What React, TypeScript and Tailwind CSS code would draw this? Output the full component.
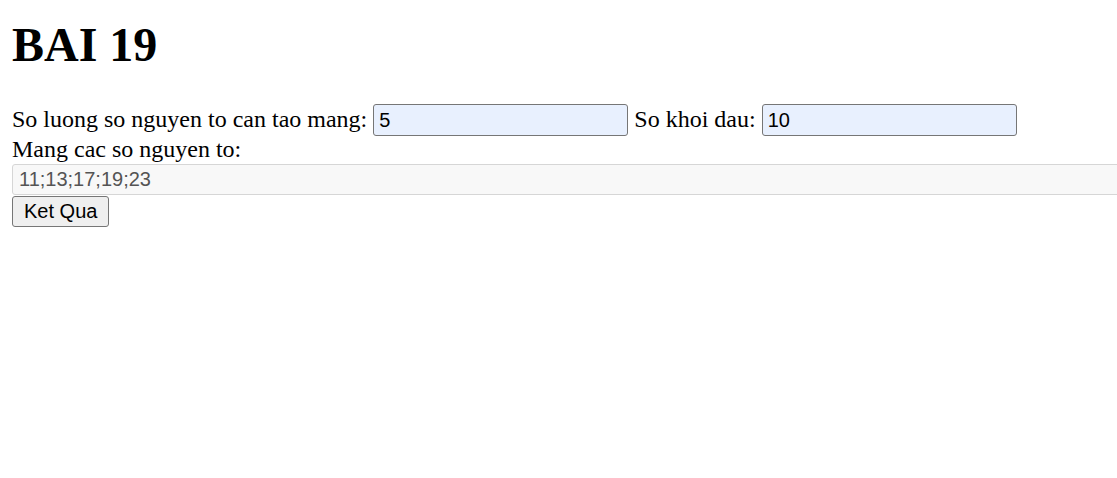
import {useState} from 'react';

// sieve-free check, enough for small numbers
function isPrime(n: number) {
  if (n < 2) return false;
  for (let i = 2; i * i <= n; i++) {
    if (n % i === 0) return false;
  }
  return true;
}

function primesFrom(count: number, start: number) {
  const out: number[] = [];
  let n = start;
  while (out.length < count) {
    if (isPrime(n)) out.push(n);
    n++;
  }
  return out;
}

const inputCls =
  "inline-block align-baseline w-[255px] h-[32px] px-[5px] border border-[#767676] rounded-[3px] bg-[#e8f0fe] text-[20px] text-black font-['Liberation_Sans',Arial,sans-serif] outline-none";

export default function App() {
  const [count, setCount] = useState('5');
  const [start, setStart] = useState('10');
  const [result, setResult] = useState('11;13;17;19;23');

  function handleSubmit(e: React.FormEvent) {
    e.preventDefault();
    const c = parseInt(count, 10) || 0;
    const s = parseInt(start, 10) || 0;
    setResult(primesFrom(c, s).join(';'));
  }

  return (
    <div className="w-full min-h-[478px] overflow-hidden bg-white px-[12px] text-black font-['Liberation_Serif','Times_New_Roman',serif]">
      <h1 className="mt-[17px] mb-[32px] text-[48px] leading-[55px] font-bold">BAI 19</h1>

      <form onSubmit={handleSubmit}>
        <div className="text-[24px] leading-[27.6px]">
          So luong so nguyen to can tao mang:{' '}
          <input
            className={inputCls}
            type="text"
            value={count}
            onChange={(e) => setCount(e.target.value)}
          />{' '}
          So khoi dau:{' '}
          <input
            className={inputCls}
            type="text"
            value={start}
            onChange={(e) => setStart(e.target.value)}
          />
        </div>
        <div className="text-[24px] leading-[27.6px]">Mang cac so nguyen to:</div>
        <input
          className="block w-[1120px] h-[31px] px-[6px] border border-[#d6d6d6] rounded-[3px] bg-[#f8f8f8] text-[20px] text-[#545454] font-['Liberation_Sans',Arial,sans-serif] outline-none"
          type="text"
          readOnly
          value={result}
        />
        <button
          type="submit"
          className="block mt-[1px] h-[31px] px-[11px] border border-[#767676] rounded-[3px] bg-[#efefef] text-[20px] leading-[23px] text-black font-['Liberation_Sans',Arial,sans-serif]"
        >
          Ket Qua
        </button>
      </form>
    </div>
  );
}
